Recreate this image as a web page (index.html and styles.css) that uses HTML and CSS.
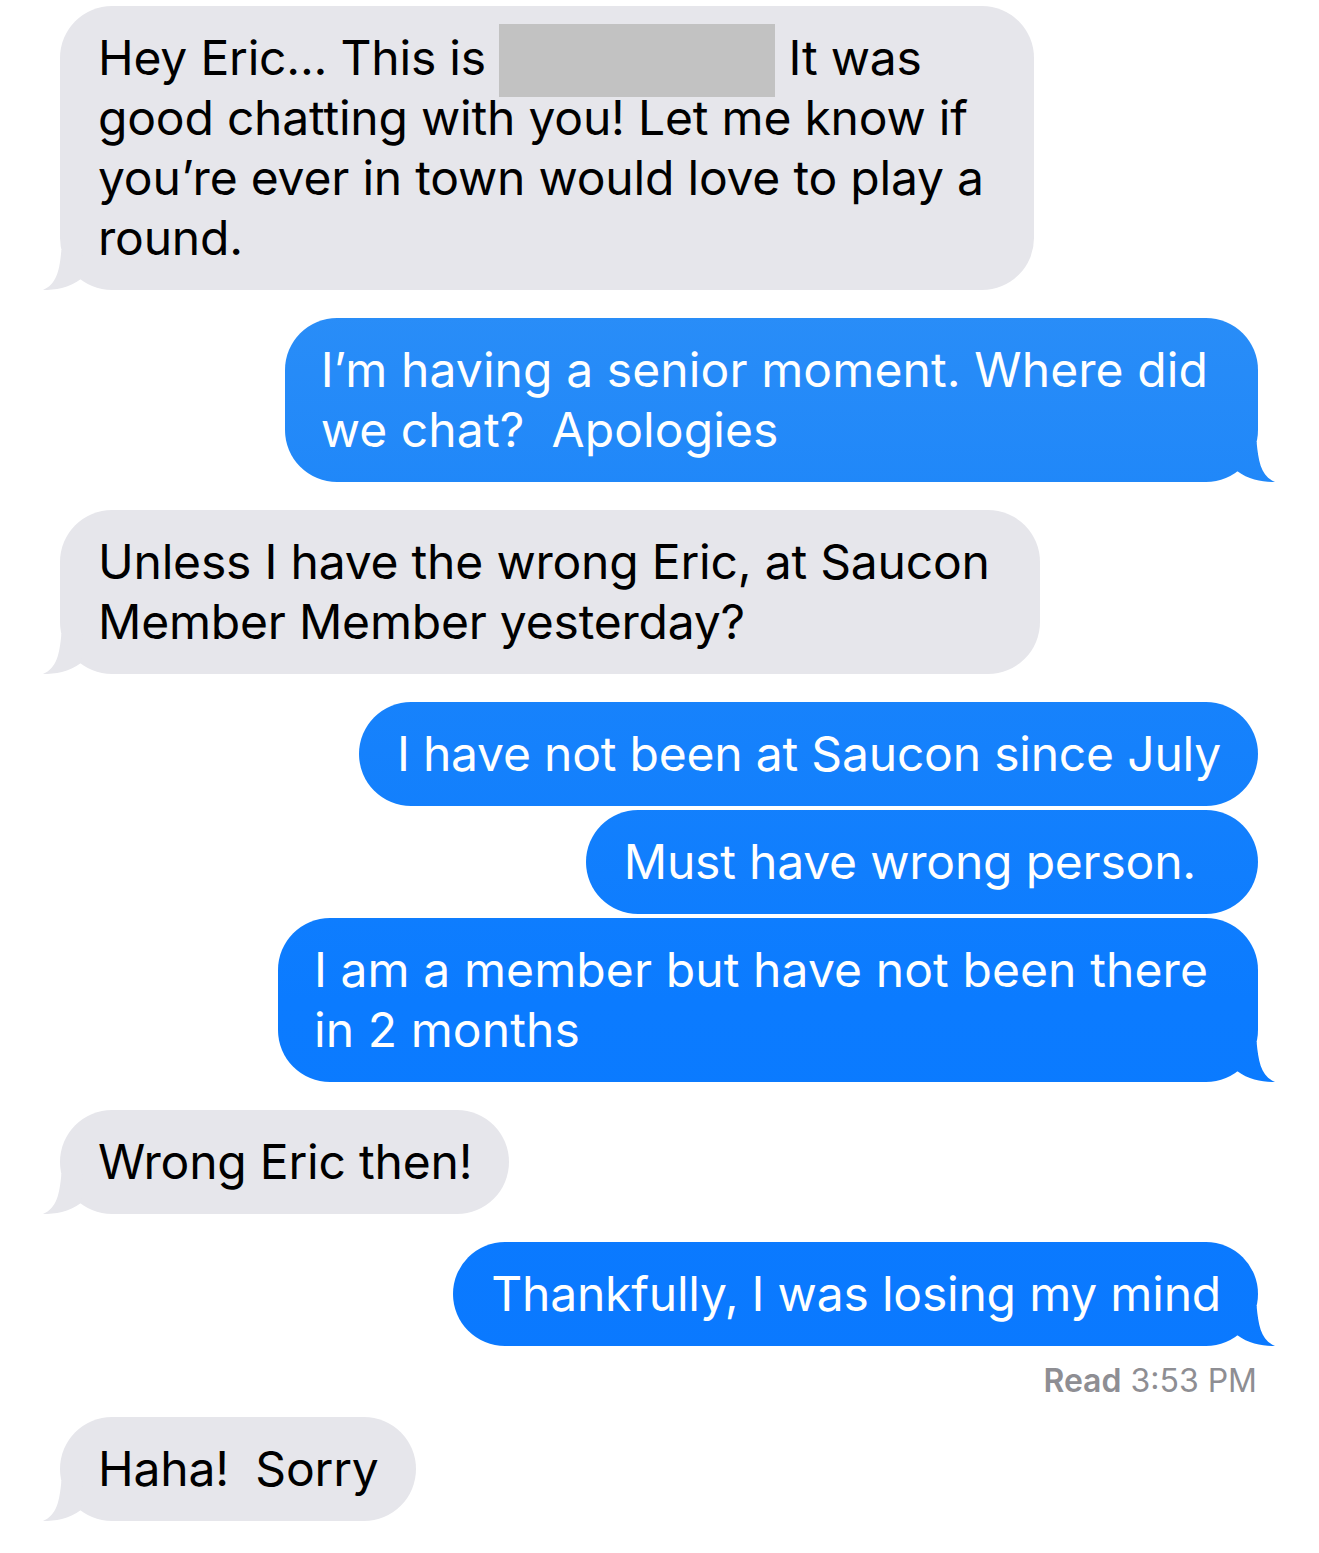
FILE: index.html
```html
<!DOCTYPE html>
<html lang="en">
<head>
<meta charset="utf-8">
<title>Messages</title>
<link rel="stylesheet" href="styles.css">
</head>
<body>
<main class="thread">
  <div class="msg in tail multi first">Hey Eric... This is <span class="redact"></span> It was<br>good chatting with you! Let me know if<br>you’re ever in town would love to play a<br>round.</div>

  <div class="msg out tail multi wide gap">I’m having a senior moment. Where did<br>we chat?&nbsp; Apologies</div>

  <div class="msg in tail multi gap">Unless I have the wrong Eric, at Saucon<br>Member Member yesterday?</div>

  <div class="msg out gap">I have not been at Saucon since July</div>
  <div class="msg out trailing near">Must have wrong person.</div>
  <div class="msg out tail multi wide near">I am a member but have not been there<br>in 2 months</div>

  <div class="msg in tail gap">Wrong Eric then!</div>

  <div class="msg out tail gap">Thankfully, I was losing my mind</div>
  <div class="receipt"><b>Read</b> 3:53 PM</div>

  <div class="msg in tail after-receipt">Haha!&nbsp; Sorry</div>
</main>
</body>
</html>
```

FILE: styles.css
```css
html, body {
  margin: 0;
  padding: 0;
  background: #ffffff;
}

body {
  font-family: "Inter", "Noto Sans", "Liberation Sans", sans-serif;
  -webkit-font-smoothing: antialiased;
}

.thread {
  display: flex;
  flex-direction: column;
  padding: 6px 61px 0 60px;
}

.msg {
  position: relative;
  box-sizing: border-box;
  font-size: 48px;
  line-height: 60px;
  padding: 22px 37px 22px 38px;
  border-radius: 52px;
  white-space: nowrap;
  letter-spacing: -0.2px;
}

.msg.multi {
  padding-right: 50px;
}

.msg.multi.wide {
  padding-left: 36px;
  padding-right: 50px;
  letter-spacing: 0.1px;
}

.msg.trailing {
  padding-right: 62px;
}

.msg.in {
  align-self: flex-start;
  background: #e6e6eb;
  color: #000000;
}

.msg.out {
  align-self: flex-end;
  color: #ffffff;
  background: linear-gradient(180deg, #3a97f5 0px, #1f87f9 500px, #0b7bff 1000px, #0a78ff 1553px) fixed;
}

.msg.gap { margin-top: 28px; }
.msg.near { margin-top: 4px; }
.msg.after-receipt { margin-top: 17px; }

.msg.tail::after {
  content: "";
  position: absolute;
  bottom: 0;
  width: 60px;
  height: 40px;
  background: inherit;
}

.msg.out.tail::after {
  right: -17px;
  clip-path: path("M 20 0 L 41.6 0 C 43.5 20 46 34 60 40 C 48 40 34 38 22 29 Z");
}

.msg.in.tail::after {
  left: -17px;
  clip-path: path("M 40 0 L 18.4 0 C 16.5 20 14 34 0 40 C 12 40 26 38 38 29 Z");
}

.redact {
  display: inline-block;
  width: 276px;
  height: 73px;
  vertical-align: top;
  margin-top: -4px;
  margin-bottom: -9px;
  background: #c2c2c2;
}

.receipt {
  align-self: flex-end;
  margin-top: 16px;
  margin-right: 1px;
  font-size: 32px;
  line-height: 38px;
  color: #8e8e93;
}

.receipt b {
  font-weight: 600;
}
```
